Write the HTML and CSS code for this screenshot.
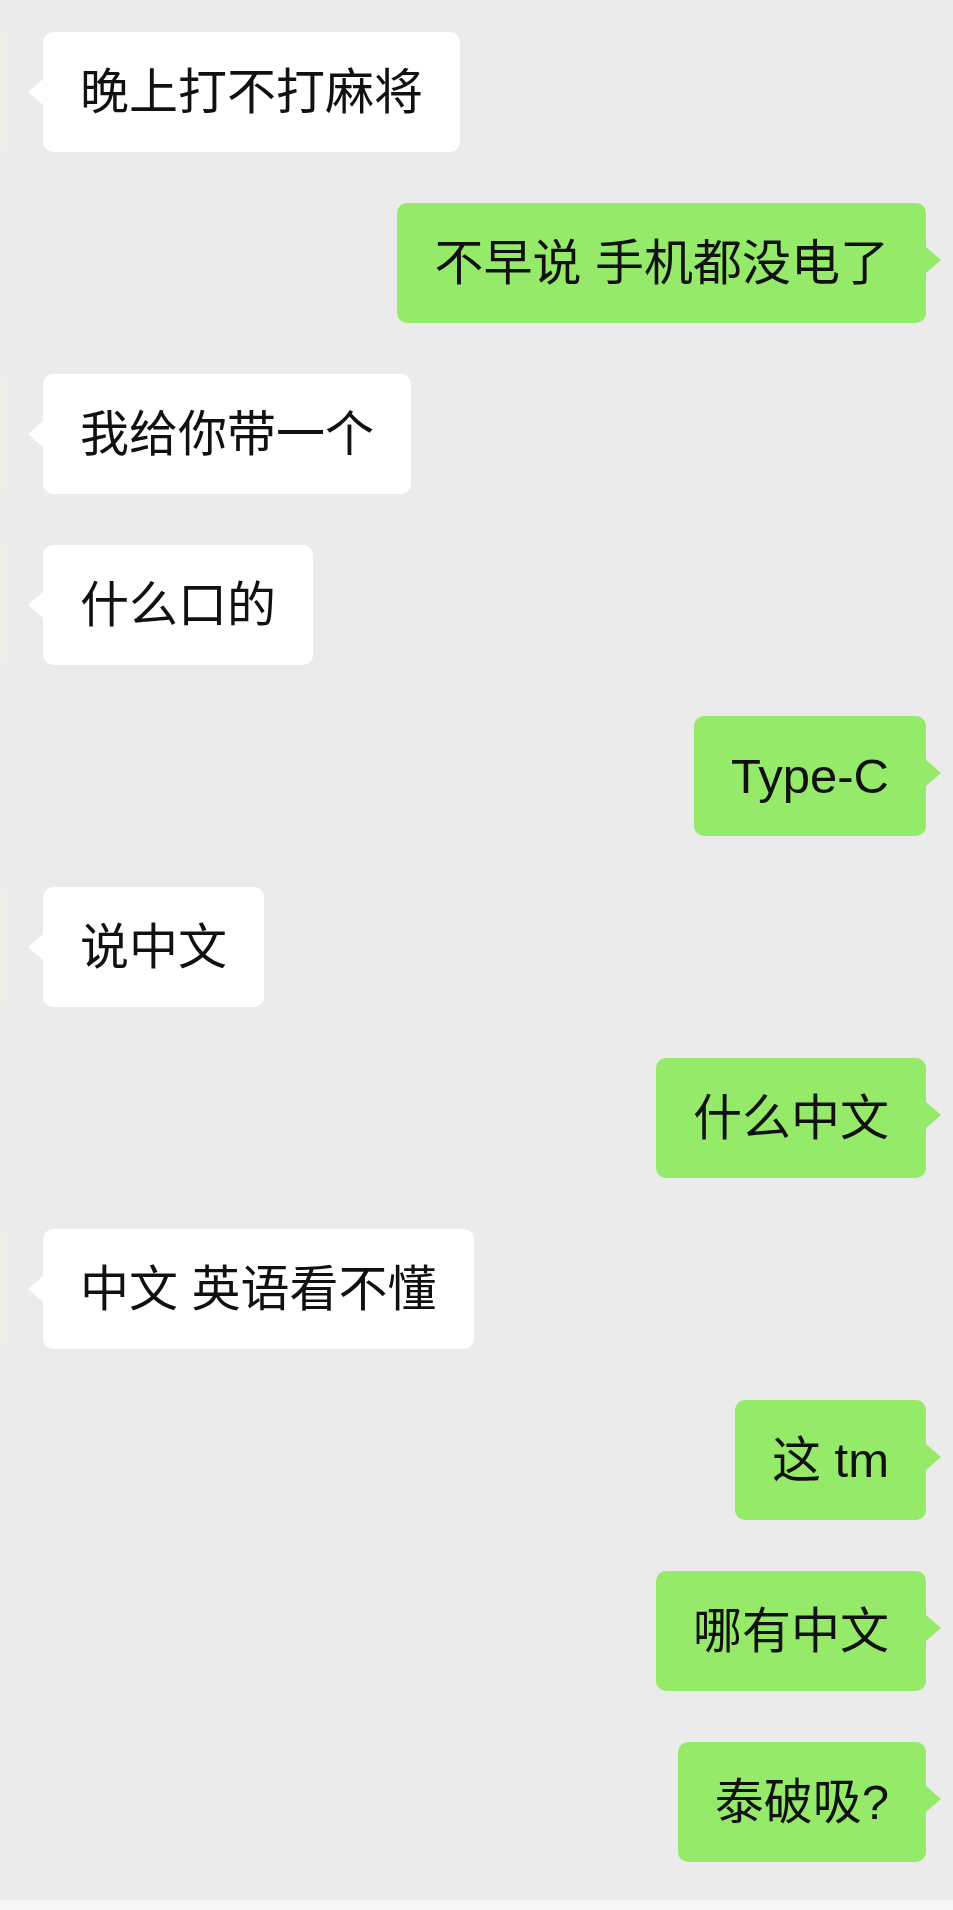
FILE: index.html
```html
<!DOCTYPE html>
<html lang="zh-CN">
<head>
    <meta charset="UTF-8">
    <meta name="viewport" content="width=device-width, initial-scale=1.0">
    <title>聊天记录</title>
    <link rel="stylesheet" href="styles.css">
</head>
<body>
    <div class="chat">
        <!-- them -->
        <div class="row left">
            <div class="avatar"></div>
            <div class="bubble">晚上打不打麻将</div>
        </div>
        <!-- me -->
        <div class="row right">
            <div class="bubble">不早说 手机都没电了</div>
        </div>
        <div class="row left">
            <div class="avatar"></div>
            <div class="bubble">我给你带一个</div>
        </div>
        <div class="row left">
            <div class="avatar"></div>
            <div class="bubble">什么口的</div>
        </div>
        <div class="row right">
            <div class="bubble">Type-C</div>
        </div>
        <div class="row left">
            <div class="avatar"></div>
            <div class="bubble">说中文</div>
        </div>
        <div class="row right">
            <div class="bubble">什么中文</div>
        </div>
        <div class="row left">
            <div class="avatar"></div>
            <div class="bubble">中文 英语看不懂</div>
        </div>
        <div class="row right">
            <div class="bubble">这 tm</div>
        </div>
        <div class="row right">
            <div class="bubble">哪有中文</div>
        </div>
        <div class="row right">
            <div class="bubble">泰破吸?</div>
        </div>
    </div>
    <div class="bottom-bar"></div>
</body>
</html>
```
FILE: styles.css
```css
body {
    margin: 0;
    padding: 0;
    background-color: #ebebeb;
    font-family: "Liberation Sans", "Noto Sans CJK SC", sans-serif;
    color: #111;
}
.chat {
    display: flex;
    flex-direction: column;
    gap: 51px;
    padding: 32px 27px 38px 0;
}
.row {
    display: flex;
    align-items: flex-start;
}
.row.left {
    justify-content: flex-start;
}
.row.right {
    justify-content: flex-end;
}
.avatar {
    width: 9px;
    height: 120px;
    margin-right: 34px;
    border-radius: 0 4px 4px 0;
    background: linear-gradient(90deg, #f0ece7, #eeebe8 60%, #ececec);
}
.bubble {
    position: relative;
    font-size: 49px;
    line-height: 60px;
    padding: 30px 37px;
    border-radius: 10px;
    white-space: nowrap;
}
.left .bubble {
    background-color: #fff;
}
.right .bubble {
    background-color: #95ea6a;
}
.left .bubble::before {
    content: "";
    position: absolute;
    left: -15px;
    top: 47px;
    border-top: 13px solid transparent;
    border-bottom: 13px solid transparent;
    border-right: 15px solid #fff;
}
.right .bubble::after {
    content: "";
    position: absolute;
    right: -15px;
    top: 44px;
    border-top: 13px solid transparent;
    border-bottom: 13px solid transparent;
    border-left: 15px solid #95ea6a;
}
.bottom-bar {
    height: 10px;
    background-color: #f6f6f6;
}
```
